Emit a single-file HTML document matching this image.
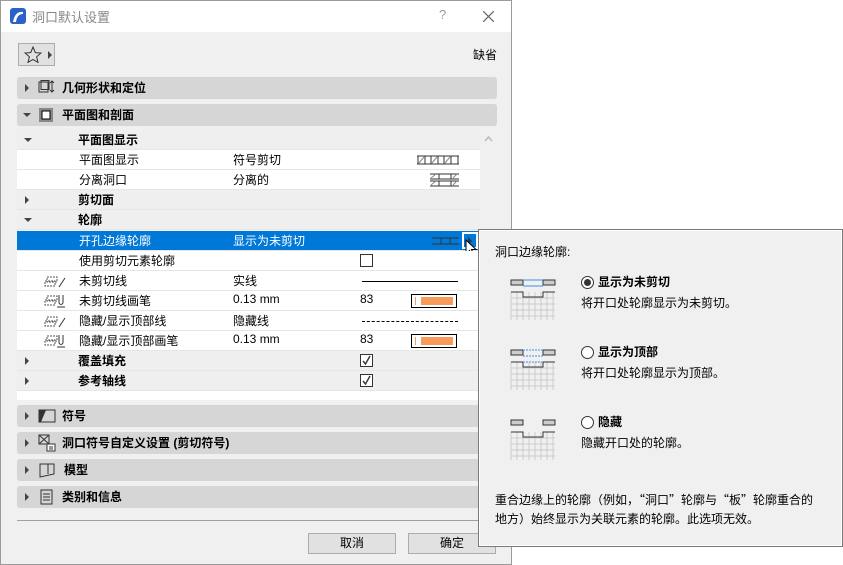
<!DOCTYPE html>
<html><head><meta charset="utf-8"><style>
*{margin:0;padding:0;box-sizing:border-box}
body{width:843px;height:565px;background:#fff;position:relative;overflow:hidden;font-family:"Liberation Sans","Noto Sans CJK SC",sans-serif;font-size:12px;color:#000}
.a{position:absolute}
.dlg{left:0;top:0;width:512px;height:565px;background:#f0f0f0;border:1px solid #9a9a9a}
.title{left:0;top:0;width:510px;height:31px;background:#fff}
.sec{left:16px;width:480px;height:22px;background:#d6d6d6;border-radius:3px}
.sec b{position:absolute;left:45px;top:2px;font-size:12px}
.tri{position:absolute;width:0;height:0;border-top:4px solid transparent;border-bottom:4px solid transparent;border-left:4px solid #444}
.trd{position:absolute;width:0;height:0;border-left:4px solid transparent;border-right:4px solid transparent;border-top:4px solid #444}
.row{left:16px;width:463px;height:20px;border-bottom:1px solid #e6e6e6}
.row span{position:absolute;top:1px}
.h{background:#efefef}
.w{background:#fff}
.cb{position:absolute;width:13px;height:13px;border:1px solid #333;background:#fff}
.pen{position:absolute;left:394px;top:3px;width:46px;height:14px;border:1px solid #000;background:#fff}
.pen i{position:absolute;left:9px;top:2px;width:32px;height:8px;background:#f79a5a}
.pen u{position:absolute;left:3px;top:2px;width:1px;height:8px;background:#f79a5a}
.btn{top:532px;width:88px;height:21px;border:1px solid #adadad;background:#e1e1e1;text-align:center;line-height:19px}
.pop{left:478px;top:229px;width:365px;height:318px;background:#f0f0f0;border:1px solid #7a7a7a;box-shadow:inset 0 0 0 1px #fff,inset 0 0 0 2px #f0f0f0}
.rad{position:absolute;width:13px;height:13px;border:1px solid #333;border-radius:50%;background:#fff}
</style></head><body>
<div class="a dlg">
 <div class="a title">
  <svg class="a" style="left:9px;top:7px" width="16" height="16"><rect width="16" height="16" rx="3" fill="#2b62c9"/><path d="M3 14 Q5 3 13 4 L13 6 Q7 6 6 14Z" fill="#fff"/></svg>
  <span class="a" style="left:31px;top:6px;color:#888;font-size:13px">洞口默认设置</span>
  <span class="a" style="left:438px;top:6px;color:#999;font-size:13px">?</span>
  <svg class="a" style="left:482px;top:10px" width="11" height="11"><path d="M0 0L11 11M11 0L0 11" stroke="#666" stroke-width="1.2"/></svg>
 </div>
 <div class="a" style="left:17px;top:42px;width:37px;height:23px;border:1px solid #adadad;background:#e1e1e1">
  <svg class="a" style="left:5px;top:2px" width="18" height="17"><path d="M9 1L11.3 6.6 17 7 12.6 10.8 14 16.4 9 13.4 4 16.4 5.4 10.8 1 7 6.7 6.6Z" fill="none" stroke="#333"/></svg>
  <div class="tri" style="left:29px;top:7px"></div>
 </div>
 <span class="a" style="left:472px;top:45px">缺省</span>
 <div class="a sec" style="top:76px"><div class="tri" style="left:8px;top:7px"></div>
  <svg class="a" style="left:21px;top:3px" width="18" height="16"><rect x="1" y="2" width="9" height="10" fill="none" stroke="#333"/><rect x="3" y="0.5" width="8" height="9" fill="none" stroke="#333"/><path d="M14 1v11M12 3l2-2 2 2M12 10l2 2 2-2" stroke="#333" fill="none"/></svg><b>几何形状和定位</b></div>
 <div class="a sec" style="top:103px"><div class="trd" style="left:6px;top:9px"></div>
  <svg class="a" style="left:21px;top:3px" width="16" height="16"><rect x="1" y="1" width="14" height="14" fill="#888"/><rect x="4" y="4" width="8" height="8" fill="#fff" stroke="#000"/></svg><b>平面图和剖面</b></div>
 <div class="a" style="left:479px;top:129px;width:17px;height:270px;background:#f0f0f0"><svg class="a" style="left:4px;top:6px" width="9" height="6"><path d="M1 5L4.5 1 8 5" stroke="#bbb" fill="none" stroke-width="1.5"/></svg></div>

 <div class="a row h" style="top:129px"><div class="trd" style="left:7px;top:8px"></div><span style="left:61px;font-weight:bold">平面图显示</span></div>
 <div class="a row w" style="top:149px"><span style="left:62px">平面图显示</span><span style="left:216px">符号剪切</span>
  <svg class="a" style="left:400px;top:5px" width="42" height="10"><path d="M0 1H42M0 9H42M1 1V9M14 1V9M27 1V9M41 1V9M8 1V9M21 1V9M34 1V9" stroke="#333" fill="none"/><path d="M2 8L7 2M15 8L20 2M28 8L33 2" stroke="#888"/></svg></div>
 <div class="a row w" style="top:169px"><span style="left:62px">分离洞口</span><span style="left:216px">分离的</span>
  <svg class="a" style="left:413px;top:3px" width="29" height="14"><path d="M0 1H29M0 6H29M0 8H29M0 13H29M9 1V6M21 1V6M9 8V13M21 8V13" stroke="#333" fill="none"/><path d="M1 5L6 1M23 5L27 1M1 12L6 8M23 12L27 8" stroke="#888"/></svg></div>
 <div class="a row h" style="top:189px"><div class="tri" style="left:8px;top:6px"></div><span style="left:61px;font-weight:bold">剪切面</span></div>
 <div class="a row h" style="top:209px"><div class="trd" style="left:7px;top:8px"></div><span style="left:61px;font-weight:bold">轮廓</span></div>
 <div class="a row" style="top:230px;background:#0078d7;color:#fff;width:463px"><span style="left:62px">开孔边缘轮廓</span><span style="left:216px">显示为未剪切</span>
  <svg class="a" style="left:415px;top:6px" width="27" height="8"><path d="M0 1H27M0 7H27M9 1V7M18 1V7" stroke="#333" fill="none"/></svg>
  <div class="a" style="left:445px;top:1px;width:16px;height:17px;border:2px solid #fff;background:#0078d7"><div class="tri" style="left:4px;top:3px;border-left-color:#333"></div></div>
  <svg class="a" style="left:448px;top:8px" width="14" height="20"><path d="M1 1V15L4.5 11.5 7 17 9 16 6.5 10.5H11Z" fill="#fff" stroke="#000"/></svg></div>
 <div class="a row w" style="top:250px"><span style="left:62px">使用剪切元素轮廓</span><div class="cb" style="left:343px;top:3px"></div></div>
 <div class="a row w" style="top:270px"><svg class="a" style="left:27px;top:3px" width="24" height="14"><path d="M3 3h10v5H3z M1 7h10v5H1z" fill="none" stroke="#555" stroke-dasharray="2 1"/><path d="M15 13L21 4" stroke="#333"/></svg><span style="left:62px">未剪切线</span><span style="left:216px">实线</span><div class="a" style="left:345px;top:10px;width:96px;height:1px;background:#000"></div></div>
 <div class="a row w" style="top:290px"><svg class="a" style="left:27px;top:2px" width="24" height="16"><path d="M3 3h10v5H3z M1 7h10v5H1z" fill="none" stroke="#555" stroke-dasharray="2 1"/><path d="M15 2v8q2 3 4 0V2M13 14h8" stroke="#333" fill="none"/></svg><span style="left:62px">未剪切线画笔</span><span style="left:216px">0.13 mm</span><span style="left:343px">83</span><div class="pen"><u></u><i></i></div></div>
 <div class="a row w" style="top:310px"><svg class="a" style="left:27px;top:3px" width="24" height="14"><path d="M3 3h10v5H3z M1 7h10v5H1z" fill="none" stroke="#555" stroke-dasharray="2 1"/><path d="M15 13L21 4" stroke="#333"/></svg><span style="left:62px">隐藏/显示顶部线</span><span style="left:216px">隐藏线</span><div class="a" style="left:345px;top:10px;width:96px;border-top:1px dashed #000"></div></div>
 <div class="a row w" style="top:330px"><svg class="a" style="left:27px;top:2px" width="24" height="16"><path d="M3 3h10v5H3z M1 7h10v5H1z" fill="none" stroke="#555" stroke-dasharray="2 1"/><path d="M15 2v8q2 3 4 0V2M13 14h8" stroke="#333" fill="none"/></svg><span style="left:62px">隐藏/显示顶部画笔</span><span style="left:216px">0.13 mm</span><span style="left:343px">83</span><div class="pen"><u></u><i></i></div></div>
 <div class="a row h" style="top:350px"><div class="tri" style="left:8px;top:6px"></div><span style="left:61px;font-weight:bold">覆盖填充</span><div class="cb" style="left:343px;top:3px"><svg width="11" height="11" style="position:absolute;left:0;top:0"><path d="M2 6l2.5 3L9 1" stroke="#333" fill="none" stroke-width="1.4"/></svg></div></div>
 <div class="a row h" style="top:370px"><div class="tri" style="left:8px;top:6px"></div><span style="left:61px;font-weight:bold">参考轴线</span><div class="cb" style="left:343px;top:3px"><svg width="11" height="11" style="position:absolute;left:0;top:0"><path d="M2 6l2.5 3L9 1" stroke="#333" fill="none" stroke-width="1.4"/></svg></div></div>
 <div class="a" style="left:16px;top:390px;width:463px;height:9px;background:#fff"></div>

 <div class="a sec" style="top:404px"><div class="tri" style="left:8px;top:7px"></div><svg class="a" style="left:21px;top:4px" width="18" height="14"><path d="M1 1H17V13H1Z" fill="none" stroke="#333"/><path d="M1 1H8L3 13H1Z" fill="#333"/></svg><b>符号</b></div>
 <div class="a sec" style="top:431px"><div class="tri" style="left:8px;top:7px"></div><svg class="a" style="left:21px;top:2px" width="18" height="18"><rect x="1" y="1" width="10" height="9" fill="none" stroke="#333"/><path d="M1 1l10 9M11 1L1 10" stroke="#333"/><rect x="9" y="10" width="8" height="7" fill="#fff" stroke="#333"/><path d="M11 13h4M11 15h4" stroke="#333"/></svg><b>洞口符号自定义设置 (剪切符号)</b></div>
 <div class="a sec" style="top:458px"><div class="tri" style="left:8px;top:7px"></div><svg class="a" style="left:21px;top:3px" width="18" height="16"><path d="M2 2H16V12L2 15Z M10 2V12" fill="none" stroke="#333"/></svg><b style="left:47px">模型</b></div>
 <div class="a sec" style="top:485px"><div class="tri" style="left:8px;top:7px"></div><svg class="a" style="left:23px;top:3px" width="14" height="16"><rect x="1" y="1" width="11" height="14" fill="none" stroke="#333"/><path d="M3 5h7M3 8h7M3 11h7" stroke="#333"/></svg><b>类别和信息</b></div>
 <div class="a" style="left:16px;top:519px;width:480px;height:1px;background:#a0a0a0"></div>
 <div class="a btn" style="left:307px">取消</div>
 <div class="a btn" style="left:407px">确定</div>
</div>

<div class="a pop">
 <span class="a" style="left:16px;top:13px">洞口边缘轮廓:</span>
 <svg class="a" style="left:30px;top:48px" width="48" height="42"><g stroke="#ccc"><path d="M2 14V42M8 14V42M14 14V42M20 14V42M26 14V42M32 14V42M38 14V42M44 14V42M2 20H46M2 26H46M2 32H46M2 38H46"/></g><rect x="2" y="2" width="12" height="5" fill="#ccc" stroke="#333"/><rect x="34" y="2" width="12" height="5" fill="#ccc" stroke="#333"/><path d="M2 14H14V19H34V14H46" fill="none" stroke="#333"/><path d="M14 2H34M14 8H34" stroke="#3a8ee8"/></svg>
 <div class="rad" style="left:102px;top:46px"><div class="a" style="left:2px;top:2px;width:7px;height:7px;border-radius:50%;background:#333"></div></div>
 <b class="a" style="left:119px;top:43px">显示为未剪切</b>
 <span class="a" style="left:102px;top:64px">将开口处轮廓显示为未剪切。</span>
 <svg class="a" style="left:30px;top:118px" width="48" height="42"><g stroke="#ccc"><path d="M2 14V42M8 14V42M14 14V42M20 14V42M26 14V42M32 14V42M38 14V42M44 14V42M2 20H46M2 26H46M2 32H46M2 38H46"/></g><rect x="2" y="2" width="12" height="5" fill="#ccc" stroke="#333"/><rect x="34" y="2" width="12" height="5" fill="#ccc" stroke="#333"/><path d="M2 14H14V19H34V14H46" fill="none" stroke="#333"/><path d="M14 2H34M14 8H34M14 14H34" stroke="#3a8ee8" stroke-dasharray="2 1"/></svg>
 <div class="rad" style="left:102px;top:116px"></div>
 <b class="a" style="left:119px;top:113px">显示为顶部</b>
 <span class="a" style="left:102px;top:134px">将开口处轮廓显示为顶部。</span>
 <svg class="a" style="left:30px;top:188px" width="48" height="42"><g stroke="#ccc"><path d="M2 14V42M8 14V42M14 14V42M20 14V42M26 14V42M32 14V42M38 14V42M44 14V42M2 20H46M2 26H46M2 32H46M2 38H46"/></g><rect x="2" y="2" width="12" height="5" fill="#ccc" stroke="#333"/><rect x="34" y="2" width="12" height="5" fill="#ccc" stroke="#333"/><path d="M2 14H14V19H34V14H46" fill="none" stroke="#333"/></svg>
 <div class="rad" style="left:102px;top:186px"></div>
 <b class="a" style="left:119px;top:183px">隐藏</b>
 <span class="a" style="left:102px;top:204px">隐藏开口处的轮廓。</span>
 <span class="a" style="left:16px;top:260px;width:345px;line-height:19px;font-family:'Noto Sans CJK SC',sans-serif;white-space:nowrap">重合边缘上的轮廓（例如，“洞口”轮廓与“板”轮廓重合的<br>地方）始终显示为关联元素的轮廓。此选项无效。</span>
</div>
</body></html>
